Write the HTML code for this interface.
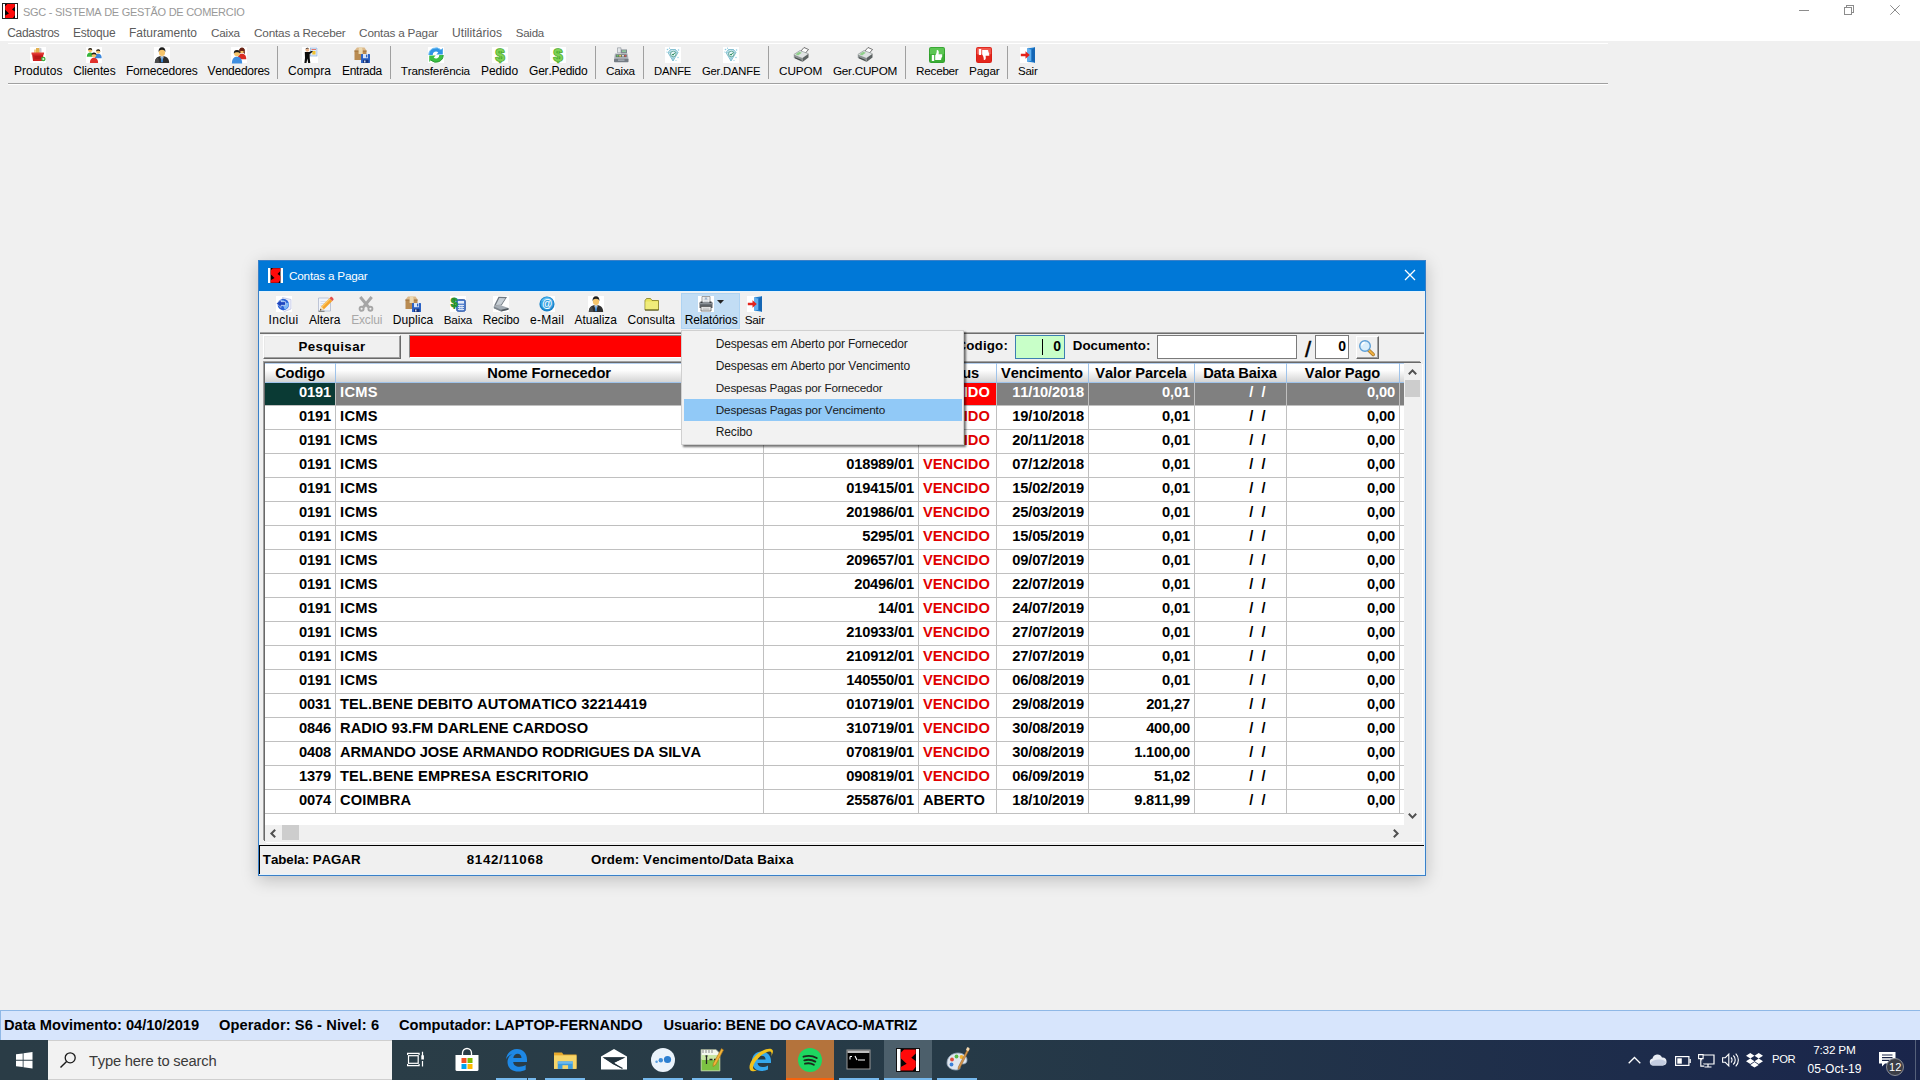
<!DOCTYPE html>
<html lang="pt-BR"><head><meta charset="utf-8"><title>SGC - SISTEMA DE GESTÃO DE COMERCIO</title>
<style>
*{margin:0;padding:0;box-sizing:border-box;font-kerning:none!important}
html,body{font-kerning:none;width:1920px;height:1080px;overflow:hidden;background:#f0f0f0;font-family:"Liberation Sans",sans-serif}
.abs{position:absolute}
svg{position:absolute;overflow:visible}
.t{position:absolute;white-space:nowrap;line-height:1}
.ui{font:12px/15px "Liberation Sans",sans-serif}
#titlebar{position:absolute;left:0;top:0;width:1920px;height:41px;background:#fff}
#tb1{position:absolute;left:8px;top:43px;width:1600px;height:41px;border-top:1px solid #fff;border-bottom:1px solid #a0a0a0;box-shadow:0 1px 0 #fff}
.vsep{position:absolute;width:1px;background:#a0a0a0}
#dlgshadow{position:absolute;left:258px;top:260px;width:1168px;height:616px;box-shadow:0 4px 16px 0 rgba(0,0,0,.21)}
#dlg{position:absolute;left:258px;top:260px;width:1168px;height:616px;background:#f0f0f0;border:1px solid #3a80c8;box-shadow:inset 1px 0 0 #e4f3fd,inset -1px 0 0 #e4f3fd,inset 0 -1px 0 #e4f3fd}
#dlgtitle{position:absolute;left:0;top:0;width:1166px;height:30px;background:#0078d7;border-bottom:0;box-shadow:0 1px 0 #e4f3fd}
#relbtn{position:absolute;left:681px;top:293px;width:59px;height:36px;background:#c2ddf4;border:1px solid #aed3f2}
#pesq{position:absolute;left:263px;top:335px;width:138px;height:24px;background:#f0f0f0;border:1px solid;border-color:#fff #696969 #696969 #fff;box-shadow:inset -1px -1px 0 #a0a0a0,inset 1px 1px 0 #e8e8e8;text-align:center;font:bold 13.33px/21px "Liberation Sans",sans-serif;letter-spacing:.35px;color:#000}
#redbox{position:absolute;left:409px;top:335px;width:330px;height:23px;background:#f00;border:1px solid;border-color:#8a8a8a #fff #fff #8a8a8a}
.lbl{font:bold 13.33px/16px "Liberation Sans",sans-serif;color:#000}
#codbox{position:absolute;left:1015px;top:335px;width:50px;height:24px;background:#c8ffc8;border:1px solid #3c7fb1}
#docbox{position:absolute;left:1157px;top:335px;width:140px;height:24px;background:#fff;border:1px solid #7a7a7a}
#parbox .v{right:2px}
#parbox{position:absolute;left:1315px;top:335px;width:34px;height:24px;background:#fff;border:1px solid #7a7a7a}
.v{position:absolute;right:3px;top:2px;font:bold 14px/16px "Liberation Sans",sans-serif;color:#000}
.caret{position:absolute;left:26px;top:3px;width:1px;height:16px;background:#000}
#lupa{position:absolute;left:1356px;top:336px;width:23px;height:23px;background:#f0f0f0;border:1px solid;border-color:#fff #696969 #696969 #fff;box-shadow:inset -1px -1px 0 #a0a0a0}
#grid{isolation:isolate;position:absolute;left:265px;top:363px;width:1157px;height:479px;background:#fff;box-shadow:-1px -1px 0 #696969,-2px -2px 0 #a0a0a0,1px 1px 0 #fff}
#ghead{position:absolute;left:0;top:0;width:1139px;height:20px;z-index:2;border-top:1px solid #b5cfee;background:linear-gradient(#fff 0%,#fdfdfd 35%,#d4d4d4 100%);border-bottom:1px solid #9fc3ea}
.gh{position:absolute;top:0;height:20px;z-index:3;text-align:center;letter-spacing:-.12px;font:bold 14.67px/21px "Liberation Sans",sans-serif;color:#000;white-space:nowrap;overflow:hidden}
.ghs{position:absolute;top:0;width:1px;height:20px;background:#9fc3ea;z-index:3}
.gvs{position:absolute;top:20px;width:1px;height:431px;background:#c0c0c0;z-index:1}
.row{position:absolute;left:0;width:1139px;height:24px;border-bottom:1px solid #c0c0c0}
.row .c{position:absolute;top:0;height:23px;font:bold 14.67px/21px "Liberation Sans",sans-serif;color:#000;white-space:nowrap;overflow:hidden}
.row .c.ar{text-align:right;padding-right:4px;letter-spacing:-.16px}
.row .c.al{text-align:left;padding-left:5px}
.row .c.ac{text-align:center}
.row .c.dt{padding-left:35px}
.row .c.venc{color:#e00000}
.row.sel{background:linear-gradient(#808080,#808080) 0 1px/100% 22px no-repeat}
.row.sel .c{color:#fff}
.row.sel .c:first-child{background:linear-gradient(#0a3a34,#0a3a34) 0 1px/100% 22px no-repeat}
.row.sel .c.venc{background:linear-gradient(#f00,#f00) 0 1px/100% 22px no-repeat;color:#fff}
#vsb{position:absolute;left:1139px;top:0;width:18px;height:479px;background:#f0f0f0;z-index:4}
#vthumb{position:absolute;left:1px;top:17px;width:15px;height:17px;background:#cdcdcd}
#hsb{position:absolute;left:0;top:462px;width:1157px;height:17px;background:#f0f0f0;z-index:4}
#hthumb{position:absolute;left:17px;top:0;width:17px;height:15px;background:#cdcdcd}
#dstat{position:absolute;left:259px;top:845px;width:1165px;height:29px;background:#f0f0f0;border-top:1px solid #000;border-left:1px solid #000}
.sb2{font:bold 13.33px/16px "Liberation Sans",sans-serif;color:#000;letter-spacing:.1px}
#menu{position:absolute;left:681px;top:330px;width:283px;height:115px;background:#f2f2f2;border:1px solid #d0d0d0;box-shadow:2px 2px 2px rgba(0,0,0,.55)}
#menu .hl{position:absolute;left:2px;top:68px;width:278px;height:22px;background:#91c9f7}
#mstat{position:absolute;left:0;top:1010px;width:1920px;height:30px;background:#d7e5fc;border-top:1px solid #8fb8e6;border-left:1px solid #8fb8e6}
.sb1{font:bold 14.67px/16px "Liberation Sans",sans-serif;color:#000}
#taskbar{position:absolute;left:0;top:1040px;width:1920px;height:40px;background:linear-gradient(90deg,#2a3c46 0%,#2a3d47 20%,#263a47 50%,#1d2c4b 85%,#1a254b 100%)}
.tk15{font:15px/18px "Liberation Sans",sans-serif}
.tk12{font:12px/15px "Liberation Sans",sans-serif}
.tk11{font:11px/13px "Liberation Sans",sans-serif}

</style></head><body>

<div id="titlebar"></div>
<svg style="left:2px;top:3px" width="16" height="16" viewBox="0 0 16 16"><rect x="0" y="0" width="16" height="16" fill="#fff"/><rect x=".5" y=".5" width="15" height="15" fill="none" stroke="#222" stroke-width="1"/><rect x="3" y="1" width="10" height="14" fill="#050505"/><path transform="translate(.5,.8) scale(1,.96)" d="M4.800 .300h7.500V3L9.500 6l2.800 2.100V12l-1.800 2.700H2.700v-2.400L6.500 10 2.700 6.300V2.500z" fill="#ff0a0a"/></svg>
<div class="t ui" style="left:23.00px;top:5px;color:#999;"><span style="line-height:0;letter-spacing:-0.272px;font-size:11.0px;">SGC - SISTEMA DE GESTÃO DE COMERCIO</span></div>
<svg style="left:1798px;top:4px" width="110" height="13" viewBox="0 0 110 13" shape-rendering="crispEdges"><path d="M1 6.500h10" stroke="#8c8c8c" stroke-width="1" fill="none"/><path d="M46.500 3.500h7v7h-7z M48.500 3.500v-2h7v7h-2" stroke="#8c8c8c" stroke-width="1" fill="none"/></svg><svg style="left:1890px;top:5px" width="10" height="10" viewBox="0 0 10 10"><path d="M.3 .3l9.400 9.400M9.700 .3L.3 9.700" stroke="#8c8c8c" stroke-width="1" fill="none"/></svg>
<div class="t ui" style="left:7.25px;top:26px;color:#5c5c5c;"><span style="line-height:0;letter-spacing:-0.299px;">Cadastros</span></div>
<div class="t ui" style="left:72.90px;top:26px;color:#5c5c5c;"><span style="line-height:0;letter-spacing:-0.204px;">Estoque</span></div>
<div class="t ui" style="left:128.90px;top:26px;color:#5c5c5c;"><span style="line-height:0;letter-spacing:0.007px;">Faturamento</span></div>
<div class="t ui" style="left:211.00px;top:26px;color:#5c5c5c;"><span style="line-height:0;letter-spacing:-0.228px;font-size:11.75px;">Caixa</span></div>
<div class="t ui" style="left:254.10px;top:26px;color:#5c5c5c;"><span style="line-height:0;letter-spacing:-0.206px;font-size:11.75px;">Contas a Receber</span></div>
<div class="t ui" style="left:359.10px;top:26px;color:#5c5c5c;"><span style="line-height:0;letter-spacing:-0.196px;font-size:11.75px;">Contas a Pagar</span></div>
<div class="t ui" style="left:452.00px;top:26px;color:#5c5c5c;"><span style="line-height:0;letter-spacing:0.069px;">Utilitários</span></div>
<div class="t ui" style="left:515.75px;top:26px;color:#5c5c5c;"><span style="line-height:0;letter-spacing:-0.232px;font-size:11.5px;">Saida</span></div>
<div id="tb1"></div>
<div class="vsep" style="left:277px;top:46px;height:33px"></div>
<div class="vsep" style="left:390px;top:46px;height:33px"></div>
<div class="vsep" style="left:595px;top:46px;height:33px"></div>
<div class="vsep" style="left:643px;top:46px;height:33px"></div>
<div class="vsep" style="left:768px;top:46px;height:33px"></div>
<div class="vsep" style="left:905px;top:46px;height:33px"></div>
<div class="vsep" style="left:1007px;top:46px;height:33px"></div>
<div class="t ui" style="left:13.90px;top:64px;color:#000;"><span style="line-height:0;letter-spacing:0.084px;">Produtos</span></div>
<svg style="left:30px;top:47px" width="16" height="16" viewBox="0 0 16 16"><rect width="16" height="16" fill="#fff"/><path d="M4 2.500h6.500v5H4z" fill="#f0cf85"/><path d="M6 1h3.500v5H6z" fill="#e2b04e"/><path d="M9.500 .500l2 1v4h-2z" fill="#c9ccd2"/><path d="M2 6.500h11.500l-1 7.500H3z" fill="#cc1f1f"/><path d="M1.500 5.500h12.500v2H1.500z" fill="#e23b35"/><path d="M4.500 9h6.500v3H4.500z" fill="#b81818"/><circle cx="13.300" cy="12" r="2.300" fill="#39b03a"/><path d="M12.300 12h2M13.300 11v2" stroke="#fff" stroke-width=".8"/></svg>
<div class="t ui" style="left:73.25px;top:64px;color:#000;"><span style="line-height:0;letter-spacing:-0.138px;">Clientes</span></div>
<svg style="left:86px;top:47px" width="16" height="16" viewBox="0 0 16 16"><rect width="16" height="16" fill="#fff"/><path d="M0.8460000000000001 9.83c0-3.2760000000000002 1.56-4.367999999999999 3.354-4.367999999999999s3.354 1.0919999999999999 3.354 4.367999999999999z" fill="#35b43a"/><circle cx="4.2" cy="3.2" r="1.9500000000000002" fill="#f6c46a"/><path d="M2.094 3.3560000000000003a2.1060000000000003 2.262 0 0 1 4.212000000000001 0c-0.78-1.0919999999999999-3.4320000000000004-1.0919999999999999-4.212000000000001 0z" fill="#1a1a1a"/><path d="M8.76 11.200000000000001c0-3.3600000000000003 1.6-4.4799999999999995 3.44-4.4799999999999995s3.44 1.1199999999999999 3.44 4.4799999999999995z" fill="#3a86dc"/><circle cx="12.2" cy="4.4" r="2.0" fill="#f6c46a"/><path d="M10.04 4.5600000000000005a2.16 2.32 0 0 1 4.32 0c-0.8-1.1199999999999999-3.5200000000000005-1.1199999999999999-4.32 0z" fill="#1a1a1a"/><path d="M3.915 16.075c0-3.9899999999999998 1.9-5.319999999999999 4.085-5.319999999999999s4.085 1.3299999999999998 4.085 5.319999999999999z" fill="#e0302a"/><circle cx="8" cy="8" r="2.375" fill="#f6c46a"/><path d="M5.4350000000000005 8.19a2.565 2.755 0 0 1 5.13 0c-0.95-1.3299999999999998-4.18-1.3299999999999998-5.13 0z" fill="#1a1a1a"/></svg>
<div class="t ui" style="left:126.00px;top:64px;color:#000;"><span style="line-height:0;letter-spacing:-0.219px;">Fornecedores</span></div>
<svg style="left:154px;top:47px" width="16" height="16" viewBox="0 0 16 16"><rect width="16" height="16" fill="#fff"/><path d="M.8 16c0-4.800 2.700-7 7.200-7s7.200 2.200 7.200 7z" fill="#2e2e2e"/><path d="M.8 16c0-3 1.200-5 3.200-6l1.500 6z" fill="#4a4a4a"/><path d="M6.300 9.300l1.700 6.200 1.700-6.200z" fill="#fff"/><path d="M7.500 10h1l.5 4.500-1 1.300-1-1.300z" fill="#2f7fd0"/><ellipse cx="8" cy="5.600" rx="3.100" ry="3.500" fill="#f6c56c"/><path d="M4.600 5.200C4.300 2 5.800.3 8 .3s3.700 1.700 3.400 4.900c-.600-1.700-1.500-2.400-3.400-2.400s-2.800.700-3.400 2.400z" fill="#1c1c1c"/></svg>
<div class="t ui" style="left:207.60px;top:64px;color:#000;"><span style="line-height:0;letter-spacing:-0.281px;">Vendedores</span></div>
<svg style="left:231px;top:47px" width="16" height="16" viewBox="0 0 16 16"><rect width="16" height="16" fill="#fff"/><path d="M6.7 12.3c0-4.2 2.0-5.6 4.3-5.6s4.3 1.4 4.3 5.6z" fill="#d92b22"/><circle cx="11" cy="3.8" r="2.5" fill="#f6c46a"/><path d="M8.3 4.0a2.7 2.9 0 0 1 5.4 0c-1.0-1.4-4.4-1.4-5.4 0z" fill="#5a1e12"/><path d="M8.200 4.500c0-3 1.200-4 2.800-4s2.800 1 2.800 4l.2 2.500-1.500-1V4l-3 0v2l-1.500 1z" fill="#6a2416"/><path d="M0.8400000000000007 16.5c0-5.04 2.4-6.72 5.159999999999999-6.72s5.159999999999999 1.68 5.159999999999999 6.72z" fill="#3f8ee0"/><circle cx="6" cy="6.3" r="3.0" fill="#f6c46a"/><path d="M2.76 6.54a3.24 3.48 0 0 1 6.48 0c-1.2-1.68-5.28-1.68-6.48 0z" fill="#1a1a1a"/></svg>
<div class="t ui" style="left:288.00px;top:64px;color:#000;"><span style="line-height:0;letter-spacing:0.071px;">Compra</span></div>
<svg style="left:302px;top:47px" width="16" height="16" viewBox="0 0 16 16"><rect width="16" height="16" fill="#fff"/><rect x="8.500" y="1" width="6.500" height="8" fill="#dfeaf8" stroke="#8db2e0" stroke-width=".7"/><rect x="10.300" y="4" width="3.200" height="3.500" fill="#f2c230"/><path d="M9.500 2.500h4.500" stroke="#e05a4a" stroke-width=".8"/><circle cx="5.300" cy="2.800" r="1.900" fill="#e9b48c"/><path d="M3.500 2.300a1.900 1.900 0 0 1 3.600-.300c-1-.600-2.500-.500-3.600.300z" fill="#222"/><path d="M2.800 5h4.400l3-1.300.5 1-3 2.300v4l.6 5H6.200l-.9-4.500-.8 4.500H2.400l.6-5z" fill="#0c0c0c"/></svg>
<div class="t ui" style="left:342.00px;top:64px;color:#000;"><span style="line-height:0;letter-spacing:-0.289px;">Entrada</span></div>
<svg style="left:354px;top:47px" width="16" height="16" viewBox="0 0 16 16"><path d="M.5 3.500L3 0.500h7.500l2 3z" fill="#dcb98a"/><path d="M.5 3.500h12v9.500H.5z" fill="#b98b52"/><path d="M.5 3.500h12v1.200H.5z" fill="#a57740"/><path d="M5 .5h3l.7 3v3.500H4.600V3.500z" fill="#ecd9b0"/><rect x="7" y="7" width="9" height="9" rx=".6" fill="#2b62c4"/><rect x="9" y="7" width="5" height="4.200" fill="#d6e4f8"/><rect x="12" y="7.600" width="1.300" height="2.800" fill="#2b62c4"/><rect x="9" y="12.800" width="5.500" height="3.200" fill="#17357c"/><rect x="10" y="13.500" width="1.500" height="2" fill="#cfd8e8"/></svg>
<div class="t ui" style="left:400.75px;top:64px;color:#000;"><span style="line-height:0;letter-spacing:-0.206px;font-size:11.75px;">Transferência</span></div>
<svg style="left:428px;top:47px" width="16" height="16" viewBox="0 0 16 16"><rect width="16" height="16" fill="#fff"/><path d="M.8 8A7.200 7.200 0 0 1 13 2.800L14.800 1v6.500H8.300l2-2A3.300 3.300 0 0 0 4.700 8z" fill="#2f95e4"/><path d="M.8 8A7.200 7.200 0 0 1 13 2.800" fill="none" stroke="#7cc4f6" stroke-width="1"/><path d="M15.200 8A7.200 7.200 0 0 1 3 13.200L1.200 15V8.500h6.500l-2 2A3.300 3.300 0 0 0 11.300 8z" fill="#3cc043"/><path d="M15.200 8A7.200 7.200 0 0 1 3 13.200" fill="none" stroke="#2a9a34" stroke-width="1"/></svg>
<div class="t ui" style="left:481.10px;top:64px;color:#000;"><span style="line-height:0;letter-spacing:-0.077px;">Pedido</span></div>
<svg style="left:492px;top:47px" width="16" height="16" viewBox="0 0 16 16"><rect width="16" height="16" fill="#fff"/><text x="8" y="13.800" text-anchor="middle" font-family="Liberation Sans,sans-serif" font-weight="bold" font-size="16.500" fill="#69c23f" stroke="#4aa82c" stroke-width="1.400" stroke-linejoin="round">$</text><text x="8" y="13.800" text-anchor="middle" font-family="Liberation Sans,sans-serif" font-weight="bold" font-size="16.500" fill="#7fd155">$</text></svg>
<div class="t ui" style="left:529.10px;top:64px;color:#000;"><span style="line-height:0;letter-spacing:-0.240px;">Ger.Pedido</span></div>
<svg style="left:550px;top:47px" width="16" height="16" viewBox="0 0 16 16"><rect width="16" height="16" fill="#fff"/><text x="8" y="13.800" text-anchor="middle" font-family="Liberation Sans,sans-serif" font-weight="bold" font-size="16.500" fill="#69c23f" stroke="#4aa82c" stroke-width="1.400" stroke-linejoin="round">$</text><text x="8" y="13.800" text-anchor="middle" font-family="Liberation Sans,sans-serif" font-weight="bold" font-size="16.500" fill="#7fd155">$</text></svg>
<div class="t ui" style="left:606.10px;top:64px;color:#000;"><span style="line-height:0;letter-spacing:-0.248px;font-size:11.75px;">Caixa</span></div>
<svg style="left:613px;top:47px" width="16" height="16" viewBox="0 0 16 16"><path d="M4.500 .800h3.500v5h-3.500z" fill="#e4e7ea" stroke="#868e96" stroke-width=".6"/><path d="M8 2.500h6v4H8z" fill="#7d868e"/><rect x="9" y="3.300" width="4" height="1.800" fill="#8fc79a"/><path d="M2 6.500h12.500l1 5H1z" fill="#b3bac1"/><rect x="2.800" y="7.500" width="10.800" height="2.600" fill="#59605f"/><rect x="3.500" y="8" width="2" height="1.600" fill="#6cc36a"/><rect x="6.200" y="8" width="2" height="1.600" fill="#e4d25a"/><rect x="9" y="8" width="2" height="1.600" fill="#cfd4d8"/><rect x="11.500" y="8" width="1.600" height="1.600" fill="#d9534f"/><rect x="1" y="11.500" width="14.500" height="3.800" rx=".8" fill="#747c84"/><rect x="5" y="12.500" width="6.500" height="1.300" fill="#aab1b8"/></svg>
<div class="t ui" style="left:654.10px;top:64px;color:#000;"><span style="line-height:0;letter-spacing:-0.226px;font-size:11.25px;">DANFE</span></div>
<svg style="left:665px;top:47px" width="16" height="16" viewBox="0 0 16 16"><rect width="16" height="16" fill="#fff"/><path d="M3 5.500l2.500-3h5l2.500 3-5 8.500z" fill="#cfeaf0" stroke="#6db3c6" stroke-width=".8"/><path d="M3 5.500h10M5.500 2.500l2.500 11.500 2.500-11.500" stroke="#7fc0d2" stroke-width=".6" fill="none"/><circle cx="8.300" cy="7" r="2.800" fill="#e9f6f8" stroke="#4e9b8a" stroke-width=".8"/><path d="M7 7l1 1.200 1.800-2.400" stroke="#2c8c5a" stroke-width="1" fill="none"/><circle cx="2.500" cy="2.500" r=".8" fill="#8ccbe0"/><circle cx="4.500" cy="1.200" r=".6" fill="#8ccbe0"/><circle cx="13.500" cy="3" r=".8" fill="#8ccbe0"/><circle cx="13" cy="10.500" r=".7" fill="#8ccbe0"/><circle cx="11" cy="13.500" r=".6" fill="#8ccbe0"/><circle cx="1.800" cy="5" r=".5" fill="#8ccbe0"/></svg>
<div class="t ui" style="left:702.00px;top:64px;color:#000;"><span style="line-height:0;letter-spacing:-0.195px;font-size:11.25px;">Ger.DANFE</span></div>
<svg style="left:723px;top:47px" width="16" height="16" viewBox="0 0 16 16"><rect width="16" height="16" fill="#fff"/><path d="M3 5.500l2.500-3h5l2.500 3-5 8.500z" fill="#cfeaf0" stroke="#6db3c6" stroke-width=".8"/><path d="M3 5.500h10M5.500 2.500l2.500 11.500 2.500-11.500" stroke="#7fc0d2" stroke-width=".6" fill="none"/><circle cx="8.300" cy="7" r="2.800" fill="#e9f6f8" stroke="#4e9b8a" stroke-width=".8"/><path d="M7 7l1 1.200 1.800-2.400" stroke="#2c8c5a" stroke-width="1" fill="none"/><circle cx="2.500" cy="2.500" r=".8" fill="#8ccbe0"/><circle cx="4.500" cy="1.200" r=".6" fill="#8ccbe0"/><circle cx="13.500" cy="3" r=".8" fill="#8ccbe0"/><circle cx="13" cy="10.500" r=".7" fill="#8ccbe0"/><circle cx="11" cy="13.500" r=".6" fill="#8ccbe0"/><circle cx="1.800" cy="5" r=".5" fill="#8ccbe0"/></svg>
<div class="t ui" style="left:779.10px;top:64px;color:#000;"><span style="line-height:0;letter-spacing:-0.147px;font-size:11.75px;">CUPOM</span></div>
<svg style="left:793px;top:47px" width="16" height="16" viewBox="0 0 16 16"><path d="M7.500 4.500L11 .500l4.500 2-3.500 4z" fill="#fff" stroke="#3c3c3c" stroke-width=".7"/><path d="M.8 7.500L7 3.500l8.500 3.200L9.500 11z" fill="#dfe3e3"/><path d="M.8 7.500L9.500 11v4L.8 11z" fill="#8d9494"/><path d="M9.500 11l6-4.300v3.800l-6 4.500z" fill="#5c6262"/><path d="M2.500 7.300l3.800-2.500 2.500 1-3.800 2.600z" fill="#8fd08a"/><path d="M2 10.300l6.500 2.600v1L2 11.300z" fill="#3c4141"/><path d="M.8 7.500L7 3.500l8.500 3.200" fill="none" stroke="#6f7676" stroke-width=".5"/></svg>
<div class="t ui" style="left:833.00px;top:64px;color:#000;"><span style="line-height:0;letter-spacing:-0.287px;font-size:11.75px;">Ger.CUPOM</span></div>
<svg style="left:857px;top:47px" width="16" height="16" viewBox="0 0 16 16"><path d="M7.500 4.500L11 .500l4.500 2-3.500 4z" fill="#fff" stroke="#3c3c3c" stroke-width=".7"/><path d="M.8 7.500L7 3.500l8.500 3.200L9.500 11z" fill="#dfe3e3"/><path d="M.8 7.500L9.500 11v4L.8 11z" fill="#8d9494"/><path d="M9.500 11l6-4.300v3.800l-6 4.500z" fill="#5c6262"/><path d="M2.500 7.300l3.800-2.500 2.500 1-3.800 2.600z" fill="#8fd08a"/><path d="M2 10.300l6.500 2.600v1L2 11.300z" fill="#3c4141"/><path d="M.8 7.500L7 3.500l8.500 3.200" fill="none" stroke="#6f7676" stroke-width=".5"/></svg>
<div class="t ui" style="left:916.10px;top:64px;color:#000;"><span style="line-height:0;letter-spacing:-0.287px;font-size:11.75px;">Receber</span></div>
<svg style="left:929px;top:47px" width="16" height="16" viewBox="0 0 16 16"><rect x="0" y="0" width="16" height="16" rx="2.200" fill="#2f9e2b"/><rect x=".8" y=".8" width="14.400" height="7.200" rx="1.600" fill="#5cc653"/><rect x=".8" y="7" width="14.400" height="8.200" rx="1.600" fill="#3cae36"/><path d="M2.800 8h2.400v6H2.800z" fill="#fff"/><path d="M6.200 8.300C7.500 7 7.800 5 7.800 3c1.700-.300 2.400 1.500 1.800 4.300h3.200c.9 0 .9 1.400 0 1.400h-1.300 1.100c.9 0 .9 1.400 0 1.400h-1.200.8c.9 0 .9 1.400 0 1.400h-1 .4c.9 0 .9 1.400 0 1.400H6.200z" fill="#fff"/></svg>
<div class="t ui" style="left:969.10px;top:64px;color:#000;"><span style="line-height:0;letter-spacing:-0.190px;font-size:11.75px;">Pagar</span></div>
<svg style="left:976px;top:47px" width="16" height="16" viewBox="0 0 16 16"><rect x="0" y="0" width="16" height="16" rx="2.200" fill="#d81e15"/><rect x=".8" y=".8" width="14.400" height="7.200" rx="1.600" fill="#f2564c"/><rect x=".8" y="7" width="14.400" height="8.200" rx="1.600" fill="#e3261c"/><path d="M2.800 8h2.400V2H2.800z" fill="#fff"/><path d="M6.200 7.700C7.500 9 7.800 11 7.800 13c1.700.300 2.400-1.500 1.800-4.300h3.200c.9 0 .9-1.400 0-1.400h-1.300 1.100c.9 0 .9-1.400 0-1.400h-1.200.8c.9 0 .9-1.400 0-1.400h-1 .4c.9 0 .9-1.400 0-1.400H6.200z" fill="#fff"/></svg>
<div class="t ui" style="left:1018.00px;top:64px;color:#000;"><span style="line-height:0;letter-spacing:-0.238px;font-size:11.5px;">Sair</span></div>
<svg style="left:1020px;top:47px" width="16" height="16" viewBox="0 0 16 16"><rect x="0" y="0" width="8" height="16" fill="#fff"/><path d="M7 1.500L15 .300v15.400L7 14.500z" fill="#1f7fd2"/><path d="M7 1.500l4.500 1.200v11L7 14.500z" fill="#62b0ee"/><path d="M11.500 2.700L15 .300v15.400l-3.500-2z" fill="#1566b4"/><path d="M.8 6.700h4.700V4.200L9.800 8 5.500 11.800V9.300H.8z" fill="#e3241c"/></svg>
<div id="dlgshadow"></div><div id="dlg"><div id="dlgtitle"></div></div>
<svg style="left:267.5px;top:267.5px" width="15" height="15" viewBox="0 0 15 15"><rect x="0" y="0" width="15" height="15" fill="#fff"/><rect x="2.500" y="0" width="10" height="15" fill="#050505"/><path d="M4.800 .300h7.500V3L9.500 6l2.800 2.100V12l-1.800 2.700H2.700v-2.400L6.500 10 2.700 6.300V2.500z" fill="#ff0a0a"/></svg>
<div class="t ui" style="left:289.00px;top:269px;color:#fff;"><span style="line-height:0;letter-spacing:-0.224px;font-size:11.75px;">Contas a Pagar</span></div>
<svg class="abs" style="left:1404px;top:269px" width="12" height="12" viewBox="0 0 12 12"><path d="M1 1 L11 11 M11 1 L1 11" stroke="#fff" stroke-width="1.3" fill="none"/></svg>
<div id="relbtn"></div>
<div class="t ui" style="left:268.50px;top:313px;color:#000;"><span style="line-height:0;letter-spacing:0.331px;">Inclui</span></div>
<svg style="left:276px;top:296px" width="16" height="16" viewBox="0 0 16 16"><rect width="16" height="16" fill="#fff"/><path d="M6.500 1.500l8.500 2v9.500l-6.500 2.500-4-3z" fill="#eef0fa" stroke="#b9bfe0" stroke-width=".7"/><circle cx="7.300" cy="8.500" r="5.700" fill="#2a62d6"/><path d="M3 6c2-2.500 5-2 6-.5s2.500 2 3.500.5c.8 3.500-1 6.500-3.500 7.500-1.500-1-.5-3-2.500-3.500S3.500 8 3 6z" fill="#7eb8f6"/><path d="M.5 7.500L5 3.500v2.200h4.500v3.600H5v2.200z" fill="#1d46c0" stroke="#fff" stroke-width=".5"/></svg>
<div class="t ui" style="left:309.00px;top:313px;color:#000;"><span style="line-height:0;letter-spacing:0.026px;">Altera</span></div>
<svg style="left:317px;top:296px" width="16" height="16" viewBox="0 0 16 16"><path d="M1.500 2h10l2 2v11h-12z" fill="#f1f4fa" stroke="#a8b2c8" stroke-width=".7"/><path d="M3.500 5.500h6M3.500 7.500h5M3.500 9.500h3" stroke="#ccd3e2" stroke-width=".7"/><path d="M3 14.500l1.200-4L12.500 2.200l2.800 2.800L7 13.300z" fill="#f5a52c"/><path d="M4.200 10.500L12.500 2.200l1 1-8.300 8.300z" fill="#fbc868"/><path d="M12.500 2.200l1.200-1.200c.8-.8 3.600 2 2.800 2.800L15.300 5z" fill="#e2504a"/><path d="M3 14.500l1.200-4L7 13.300z" fill="#f6e3c0"/><path d="M3 14.500l.5-1.700 1.200 1.200z" fill="#2a2a2a"/><path d="M1.500 15.300h6" stroke="#555" stroke-width=".8"/></svg>
<div class="t ui" style="left:351.20px;top:313px;color:#a8a8a8;"><span style="line-height:0;letter-spacing:-0.168px;">Exclui</span></div>
<svg style="left:358px;top:296px" width="16" height="16" viewBox="0 0 16 16"><path d="M2.300 1L10.500 11M13.700 1L5.500 11" stroke="#a6a6a6" stroke-width="3" fill="none"/><circle cx="3.600" cy="12.800" r="2" fill="none" stroke="#a6a6a6" stroke-width="1.900"/><circle cx="12.400" cy="12.800" r="2" fill="none" stroke="#a6a6a6" stroke-width="1.900"/></svg>
<div class="t ui" style="left:392.80px;top:313px;color:#000;"><span style="line-height:0;letter-spacing:0.069px;">Duplica</span></div>
<svg style="left:405px;top:296px" width="16" height="16" viewBox="0 0 16 16"><path d="M.5 3.500L3 0.500h7.500l2 3z" fill="#dcb98a"/><path d="M.5 3.500h12v9.500H.5z" fill="#b98b52"/><path d="M.5 3.500h12v1.200H.5z" fill="#a57740"/><path d="M5 .5h3l.7 3v3.500H4.600V3.500z" fill="#ecd9b0"/><rect x="7" y="7" width="9" height="9" rx=".6" fill="#2b62c4"/><rect x="9" y="7" width="5" height="4.200" fill="#d6e4f8"/><rect x="12" y="7.600" width="1.300" height="2.800" fill="#2b62c4"/><rect x="9" y="12.800" width="5.500" height="3.200" fill="#17357c"/><rect x="10" y="13.500" width="1.500" height="2" fill="#cfd8e8"/></svg>
<div class="t ui" style="left:443.70px;top:313px;color:#000;"><span style="line-height:0;letter-spacing:-0.178px;font-size:11.75px;">Baixa</span></div>
<svg style="left:450px;top:296px" width="16" height="16" viewBox="0 0 16 16"><rect width="16" height="16" fill="#fff"/><rect x="6.500" y="3.500" width="9" height="12" rx="1.800" fill="#4a78c8" stroke="#2d559e" stroke-width=".7"/><rect x="8" y="5" width="6" height="2.600" fill="#e3ecf8"/><path d="M8 9.500h6M8 11.500h6M8 13.500h6M9.800 8.700v5.600M12 8.700v5.600" stroke="#dce6f6" stroke-width="1"/><text x="4.300" y="10.500" text-anchor="middle" font-family="Liberation Sans,sans-serif" font-weight="bold" font-size="12.500" fill="#2fae3a" stroke="#1f8a2a" stroke-width=".8">$</text></svg>
<div class="t ui" style="left:482.80px;top:313px;color:#000;"><span style="line-height:0;letter-spacing:-0.159px;">Recibo</span></div>
<svg style="left:493px;top:296px" width="16" height="16" viewBox="0 0 16 16"><rect width="16" height="16" fill="#fff"/><path d="M5.500 .800l8.500.300-5.500 8.400-7.500.300z" fill="#707880"/><path d="M6.300 2l6 .200-4.300 6.500-5.200.200z" fill="#c9d0d6"/><path d="M.8 10l7.700-.500L15.500 12v1.800l-7.300 1.700L.8 12.200z" fill="#a5adb5"/><path d="M8.200 13.700l7.300-1.700v1.800l-7.300 1.700z" fill="#50585f"/><path d="M.8 10.500l7.400 3.200v1.800L.8 12.200z" fill="#7b838b"/></svg>
<div class="t ui" style="left:530.00px;top:313px;color:#000;"><span style="line-height:0;letter-spacing:0.255px;">e-Mail</span></div>
<svg style="left:539px;top:296px" width="16" height="16" viewBox="0 0 16 16"><rect x="8" y="0" width="8" height="16" fill="#fff"/><circle cx="8" cy="8" r="7.600" fill="#1a82c8"/><circle cx="8" cy="7.200" r="6.400" fill="#36a4e4"/><path d="M2.500 5a6.400 6.400 0 0 1 11 0c-3-1.500-8-1.500-11 0z" fill="#6cc2f2"/><text x="8" y="11" text-anchor="middle" font-family="Liberation Sans,sans-serif" font-weight="bold" font-size="10.500" fill="#fff">@</text></svg>
<div class="t ui" style="left:574.50px;top:313px;color:#000;"><span style="line-height:0;letter-spacing:-0.024px;">Atualiza</span></div>
<svg style="left:588px;top:296px" width="16" height="16" viewBox="0 0 16 16"><rect width="16" height="16" fill="#fff"/><path d="M.8 16c0-4.800 2.700-7 7.200-7s7.200 2.200 7.200 7z" fill="#2e2e2e"/><path d="M.8 16c0-3 1.200-5 3.200-6l1.500 6z" fill="#4a4a4a"/><path d="M6.300 9.300l1.700 6.200 1.700-6.200z" fill="#fff"/><path d="M7.500 10h1l.5 4.500-1 1.300-1-1.300z" fill="#2f7fd0"/><ellipse cx="8" cy="5.600" rx="3.100" ry="3.500" fill="#f6c56c"/><path d="M4.600 5.200C4.300 2 5.800.3 8 .3s3.700 1.700 3.400 4.900c-.600-1.700-1.500-2.400-3.400-2.400s-2.800.700-3.400 2.400z" fill="#1c1c1c"/></svg>
<div class="t ui" style="left:627.50px;top:313px;color:#000;"><span style="line-height:0;letter-spacing:0.005px;">Consulta</span></div>
<svg style="left:644px;top:296px" width="16" height="16" viewBox="0 0 16 16"><path d="M1 4.500L2.500 2.500h4L8 4.500h6.500v9.500H1z" fill="#e9e35a" stroke="#7f7a1c" stroke-width=".8"/><path d="M1.500 5.500h12.500v8H1.500z" fill="#f0ec7a"/><path d="M1 14h13.500" stroke="#4a4a1a" stroke-width="1"/></svg>
<div class="t ui" style="left:684.80px;top:313px;color:#000;"><span style="line-height:0;letter-spacing:-0.132px;">Relatórios</span></div>
<svg style="left:698px;top:296px" width="16" height="16" viewBox="0 0 16 16"><rect width="16" height="16" fill="#fff"/><path d="M4 .500h8v6.500H4z" fill="#f8f8f8" stroke="#7a7a7a" stroke-width=".7"/><path d="M5.500 2h5M5.500 3.700h5M5.500 5.300h5" stroke="#b5bcc4" stroke-width=".7"/><rect x="7" y="1.500" width="2" height="2" fill="#9fb6d0"/><path d="M1.500 6.500h13v5.500h-13z" fill="#5d6166"/><path d="M1.500 6.500h13v1.800h-13z" fill="#8b9197"/><path d="M2.500 5.500h2v1.500h-2zM11.500 5.500h2v1.500h-2z" fill="#3d4045"/><path d="M3 10.500h10v4.500H3z" fill="#f1f1f1" stroke="#4a4a4a" stroke-width=".7"/><path d="M4.500 12.200h7M4.500 13.600h7" stroke="#a0a0a0" stroke-width=".6"/></svg>
<div class="t ui" style="left:744.80px;top:313px;color:#000;"><span style="line-height:0;letter-spacing:-0.299px;font-size:11.75px;">Sair</span></div>
<svg style="left:747px;top:296px" width="16" height="16" viewBox="0 0 16 16"><rect x="0" y="0" width="8" height="16" fill="#fff"/><path d="M7 1.500L15 .300v15.400L7 14.500z" fill="#1f7fd2"/><path d="M7 1.500l4.500 1.200v11L7 14.500z" fill="#62b0ee"/><path d="M11.500 2.700L15 .300v15.400l-3.500-2z" fill="#1566b4"/><path d="M.8 6.700h4.700V4.200L9.800 8 5.500 11.800V9.300H.8z" fill="#e3241c"/></svg>
<svg class="abs" style="left:717px;top:300px" width="8" height="4" viewBox="0 0 8 4"><path d="M0 0h7L3.5 3.8z" fill="#222"/></svg>
<div class="abs" style="left:260px;top:332px;width:1164px;height:2px;background:linear-gradient(#a6a6a6 50%,#6e6e6e 50%)"></div>
<div id="pesq"><span>Pesquisar</span></div>
<div id="redbox"></div>
<div class="t lbl" style="left:956.50px;top:338px;"><span style="line-height:0;letter-spacing:0.166px;">Codigo:</span></div>
<div id="codbox"><span class="caret"></span><span class="v">0</span></div>
<div class="t lbl" style="left:1072.80px;top:338px;"><span style="line-height:0;letter-spacing:-0.025px;">Documento:</span></div>
<div id="docbox"></div>
<div class="t" style="left:1305px;top:336.500px;-webkit-text-stroke:.5px #000;font:22px 'Liberation Sans',sans-serif;color:#000">/</div>
<div id="parbox"><span class="v">0</span></div>
<div id="lupa"><svg style="left:1px;top:2px" width="18" height="18" viewBox="0 0 18 18"><path d="M10 10.500l5.200 5" stroke="#9a6a1c" stroke-width="3.400" stroke-linecap="round"/><path d="M10 10.500l5.200 5" stroke="#f0b040" stroke-width="2.200" stroke-linecap="round"/><circle cx="7" cy="7" r="5.300" fill="#d9eefb" stroke="#5d9fd6" stroke-width="1.400"/><path d="M3.800 6.500a3.400 3.400 0 0 1 3-3" stroke="#fff" stroke-width="1.300" fill="none"/></svg></div>
<div id="grid">
<div id="ghead"></div>
<div class="gh" style="left:0px;width:70px">Codigo</div>
<div class="gh" style="left:70px;width:428px">Nome Fornecedor</div>
<div class="gh" style="left:498px;width:155px">Documento</div>
<div class="gh" style="left:653px;width:78px">Status</div>
<div class="gh" style="left:731px;width:92px">Vencimento</div>
<div class="gh" style="left:823px;width:106px">Valor Parcela</div>
<div class="gh" style="left:929px;width:92px">Data Baixa</div>
<div class="gh" style="left:1021px;width:113px">Valor Pago</div>
<div class="ghs" style="left:70px"></div>
<div class="ghs" style="left:498px"></div>
<div class="ghs" style="left:653px"></div>
<div class="ghs" style="left:731px"></div>
<div class="ghs" style="left:823px"></div>
<div class="ghs" style="left:929px"></div>
<div class="ghs" style="left:1021px"></div>
<div class="ghs" style="left:1134px"></div>
<div class="row sel" style="top:19px">
<div class="c ar" style="left:0px;width:70px">0191</div>
<div class="c al" style="left:70px;width:428px"><span style="letter-spacing:0.306px">ICMS</span></div>
<div class="c ar" style="left:498px;width:155px">017935/01</div>
<div class="c al st venc" style="left:653px;width:78px">VENCIDO</div>
<div class="c ar" style="left:731px;width:92px">11/10/2018</div>
<div class="c ar" style="left:823px;width:106px">0,01</div>
<div class="c ac dt" style="left:929px;width:92px">/&nbsp;&nbsp;/</div>
<div class="c ar" style="left:1021px;width:113px">0,00</div>
</div>
<div class="row" style="top:43px">
<div class="c ar" style="left:0px;width:70px">0191</div>
<div class="c al" style="left:70px;width:428px"><span style="letter-spacing:0.306px">ICMS</span></div>
<div class="c ar" style="left:498px;width:155px">018211/01</div>
<div class="c al st venc" style="left:653px;width:78px">VENCIDO</div>
<div class="c ar" style="left:731px;width:92px">19/10/2018</div>
<div class="c ar" style="left:823px;width:106px">0,01</div>
<div class="c ac dt" style="left:929px;width:92px">/&nbsp;&nbsp;/</div>
<div class="c ar" style="left:1021px;width:113px">0,00</div>
</div>
<div class="row" style="top:67px">
<div class="c ar" style="left:0px;width:70px">0191</div>
<div class="c al" style="left:70px;width:428px"><span style="letter-spacing:0.306px">ICMS</span></div>
<div class="c ar" style="left:498px;width:155px">018754/01</div>
<div class="c al st venc" style="left:653px;width:78px">VENCIDO</div>
<div class="c ar" style="left:731px;width:92px">20/11/2018</div>
<div class="c ar" style="left:823px;width:106px">0,01</div>
<div class="c ac dt" style="left:929px;width:92px">/&nbsp;&nbsp;/</div>
<div class="c ar" style="left:1021px;width:113px">0,00</div>
</div>
<div class="row" style="top:91px">
<div class="c ar" style="left:0px;width:70px">0191</div>
<div class="c al" style="left:70px;width:428px"><span style="letter-spacing:0.306px">ICMS</span></div>
<div class="c ar" style="left:498px;width:155px">018989/01</div>
<div class="c al st venc" style="left:653px;width:78px">VENCIDO</div>
<div class="c ar" style="left:731px;width:92px">07/12/2018</div>
<div class="c ar" style="left:823px;width:106px">0,01</div>
<div class="c ac dt" style="left:929px;width:92px">/&nbsp;&nbsp;/</div>
<div class="c ar" style="left:1021px;width:113px">0,00</div>
</div>
<div class="row" style="top:115px">
<div class="c ar" style="left:0px;width:70px">0191</div>
<div class="c al" style="left:70px;width:428px"><span style="letter-spacing:0.306px">ICMS</span></div>
<div class="c ar" style="left:498px;width:155px">019415/01</div>
<div class="c al st venc" style="left:653px;width:78px">VENCIDO</div>
<div class="c ar" style="left:731px;width:92px">15/02/2019</div>
<div class="c ar" style="left:823px;width:106px">0,01</div>
<div class="c ac dt" style="left:929px;width:92px">/&nbsp;&nbsp;/</div>
<div class="c ar" style="left:1021px;width:113px">0,00</div>
</div>
<div class="row" style="top:139px">
<div class="c ar" style="left:0px;width:70px">0191</div>
<div class="c al" style="left:70px;width:428px"><span style="letter-spacing:0.306px">ICMS</span></div>
<div class="c ar" style="left:498px;width:155px">201986/01</div>
<div class="c al st venc" style="left:653px;width:78px">VENCIDO</div>
<div class="c ar" style="left:731px;width:92px">25/03/2019</div>
<div class="c ar" style="left:823px;width:106px">0,01</div>
<div class="c ac dt" style="left:929px;width:92px">/&nbsp;&nbsp;/</div>
<div class="c ar" style="left:1021px;width:113px">0,00</div>
</div>
<div class="row" style="top:163px">
<div class="c ar" style="left:0px;width:70px">0191</div>
<div class="c al" style="left:70px;width:428px"><span style="letter-spacing:0.306px">ICMS</span></div>
<div class="c ar" style="left:498px;width:155px">5295/01</div>
<div class="c al st venc" style="left:653px;width:78px">VENCIDO</div>
<div class="c ar" style="left:731px;width:92px">15/05/2019</div>
<div class="c ar" style="left:823px;width:106px">0,01</div>
<div class="c ac dt" style="left:929px;width:92px">/&nbsp;&nbsp;/</div>
<div class="c ar" style="left:1021px;width:113px">0,00</div>
</div>
<div class="row" style="top:187px">
<div class="c ar" style="left:0px;width:70px">0191</div>
<div class="c al" style="left:70px;width:428px"><span style="letter-spacing:0.306px">ICMS</span></div>
<div class="c ar" style="left:498px;width:155px">209657/01</div>
<div class="c al st venc" style="left:653px;width:78px">VENCIDO</div>
<div class="c ar" style="left:731px;width:92px">09/07/2019</div>
<div class="c ar" style="left:823px;width:106px">0,01</div>
<div class="c ac dt" style="left:929px;width:92px">/&nbsp;&nbsp;/</div>
<div class="c ar" style="left:1021px;width:113px">0,00</div>
</div>
<div class="row" style="top:211px">
<div class="c ar" style="left:0px;width:70px">0191</div>
<div class="c al" style="left:70px;width:428px"><span style="letter-spacing:0.306px">ICMS</span></div>
<div class="c ar" style="left:498px;width:155px">20496/01</div>
<div class="c al st venc" style="left:653px;width:78px">VENCIDO</div>
<div class="c ar" style="left:731px;width:92px">22/07/2019</div>
<div class="c ar" style="left:823px;width:106px">0,01</div>
<div class="c ac dt" style="left:929px;width:92px">/&nbsp;&nbsp;/</div>
<div class="c ar" style="left:1021px;width:113px">0,00</div>
</div>
<div class="row" style="top:235px">
<div class="c ar" style="left:0px;width:70px">0191</div>
<div class="c al" style="left:70px;width:428px"><span style="letter-spacing:0.306px">ICMS</span></div>
<div class="c ar" style="left:498px;width:155px">14/01</div>
<div class="c al st venc" style="left:653px;width:78px">VENCIDO</div>
<div class="c ar" style="left:731px;width:92px">24/07/2019</div>
<div class="c ar" style="left:823px;width:106px">0,01</div>
<div class="c ac dt" style="left:929px;width:92px">/&nbsp;&nbsp;/</div>
<div class="c ar" style="left:1021px;width:113px">0,00</div>
</div>
<div class="row" style="top:259px">
<div class="c ar" style="left:0px;width:70px">0191</div>
<div class="c al" style="left:70px;width:428px"><span style="letter-spacing:0.306px">ICMS</span></div>
<div class="c ar" style="left:498px;width:155px">210933/01</div>
<div class="c al st venc" style="left:653px;width:78px">VENCIDO</div>
<div class="c ar" style="left:731px;width:92px">27/07/2019</div>
<div class="c ar" style="left:823px;width:106px">0,01</div>
<div class="c ac dt" style="left:929px;width:92px">/&nbsp;&nbsp;/</div>
<div class="c ar" style="left:1021px;width:113px">0,00</div>
</div>
<div class="row" style="top:283px">
<div class="c ar" style="left:0px;width:70px">0191</div>
<div class="c al" style="left:70px;width:428px"><span style="letter-spacing:0.306px">ICMS</span></div>
<div class="c ar" style="left:498px;width:155px">210912/01</div>
<div class="c al st venc" style="left:653px;width:78px">VENCIDO</div>
<div class="c ar" style="left:731px;width:92px">27/07/2019</div>
<div class="c ar" style="left:823px;width:106px">0,01</div>
<div class="c ac dt" style="left:929px;width:92px">/&nbsp;&nbsp;/</div>
<div class="c ar" style="left:1021px;width:113px">0,00</div>
</div>
<div class="row" style="top:307px">
<div class="c ar" style="left:0px;width:70px">0191</div>
<div class="c al" style="left:70px;width:428px"><span style="letter-spacing:0.306px">ICMS</span></div>
<div class="c ar" style="left:498px;width:155px">140550/01</div>
<div class="c al st venc" style="left:653px;width:78px">VENCIDO</div>
<div class="c ar" style="left:731px;width:92px">06/08/2019</div>
<div class="c ar" style="left:823px;width:106px">0,01</div>
<div class="c ac dt" style="left:929px;width:92px">/&nbsp;&nbsp;/</div>
<div class="c ar" style="left:1021px;width:113px">0,00</div>
</div>
<div class="row" style="top:331px">
<div class="c ar" style="left:0px;width:70px">0031</div>
<div class="c al" style="left:70px;width:428px"><span style="letter-spacing:0.067px">TEL.BENE DEBITO AUTOMATICO 32214419</span></div>
<div class="c ar" style="left:498px;width:155px">010719/01</div>
<div class="c al st venc" style="left:653px;width:78px">VENCIDO</div>
<div class="c ar" style="left:731px;width:92px">29/08/2019</div>
<div class="c ar" style="left:823px;width:106px">201,27</div>
<div class="c ac dt" style="left:929px;width:92px">/&nbsp;&nbsp;/</div>
<div class="c ar" style="left:1021px;width:113px">0,00</div>
</div>
<div class="row" style="top:355px">
<div class="c ar" style="left:0px;width:70px">0846</div>
<div class="c al" style="left:70px;width:428px"><span style="letter-spacing:0.050px">RADIO 93.FM DARLENE CARDOSO</span></div>
<div class="c ar" style="left:498px;width:155px">310719/01</div>
<div class="c al st venc" style="left:653px;width:78px">VENCIDO</div>
<div class="c ar" style="left:731px;width:92px">30/08/2019</div>
<div class="c ar" style="left:823px;width:106px">400,00</div>
<div class="c ac dt" style="left:929px;width:92px">/&nbsp;&nbsp;/</div>
<div class="c ar" style="left:1021px;width:113px">0,00</div>
</div>
<div class="row" style="top:379px">
<div class="c ar" style="left:0px;width:70px">0408</div>
<div class="c al" style="left:70px;width:428px"><span style="letter-spacing:-0.117px">ARMANDO JOSE ARMANDO RODRIGUES DA SILVA</span></div>
<div class="c ar" style="left:498px;width:155px">070819/01</div>
<div class="c al st venc" style="left:653px;width:78px">VENCIDO</div>
<div class="c ar" style="left:731px;width:92px">30/08/2019</div>
<div class="c ar" style="left:823px;width:106px">1.100,00</div>
<div class="c ac dt" style="left:929px;width:92px">/&nbsp;&nbsp;/</div>
<div class="c ar" style="left:1021px;width:113px">0,00</div>
</div>
<div class="row" style="top:403px">
<div class="c ar" style="left:0px;width:70px">1379</div>
<div class="c al" style="left:70px;width:428px"><span style="letter-spacing:0.162px">TEL.BENE EMPRESA ESCRITORIO</span></div>
<div class="c ar" style="left:498px;width:155px">090819/01</div>
<div class="c al st venc" style="left:653px;width:78px">VENCIDO</div>
<div class="c ar" style="left:731px;width:92px">06/09/2019</div>
<div class="c ar" style="left:823px;width:106px">51,02</div>
<div class="c ac dt" style="left:929px;width:92px">/&nbsp;&nbsp;/</div>
<div class="c ar" style="left:1021px;width:113px">0,00</div>
</div>
<div class="row" style="top:427px">
<div class="c ar" style="left:0px;width:70px">0074</div>
<div class="c al" style="left:70px;width:428px"><span style="letter-spacing:0.188px">COIMBRA</span></div>
<div class="c ar" style="left:498px;width:155px">255876/01</div>
<div class="c al st ab" style="left:653px;width:78px">ABERTO</div>
<div class="c ar" style="left:731px;width:92px">18/10/2019</div>
<div class="c ar" style="left:823px;width:106px">9.811,99</div>
<div class="c ac dt" style="left:929px;width:92px">/&nbsp;&nbsp;/</div>
<div class="c ar" style="left:1021px;width:113px">0,00</div>
</div>
<div class="gvs" style="left:70px"></div>
<div class="gvs" style="left:498px"></div>
<div class="gvs" style="left:653px"></div>
<div class="gvs" style="left:731px"></div>
<div class="gvs" style="left:823px"></div>
<div class="gvs" style="left:929px"></div>
<div class="gvs" style="left:1021px"></div>
<div class="gvs" style="left:1134px"></div>
<div id="vsb"><svg class="abs" style="left:4px;top:6px" width="9" height="6" viewBox="0 0 9 6"><path d="M.8 5.200 L4.5 1.4 L8.200 5.200" stroke="#505050" stroke-width="2" fill="none"/></svg><div id="vthumb"></div><svg class="abs" style="left:4px;top:450px" width="9" height="6" viewBox="0 0 9 6"><path d="M.8 .8 L4.5 4.600 L8.200 .8" stroke="#505050" stroke-width="2" fill="none"/></svg></div>
<div id="hsb"><svg class="abs" style="left:5px;top:3.5px" width="6" height="9" viewBox="0 0 6 9"><path d="M5.2 .8 L1.4 4.5 L5.2 8.200" stroke="#505050" stroke-width="2" fill="none"/></svg><div id="hthumb"></div><svg class="abs" style="left:1128px;top:3.5px" width="6" height="9" viewBox="0 0 6 9"><path d="M.8 .8 L4.600 4.5 L.8 8.200" stroke="#505050" stroke-width="2" fill="none"/></svg></div>
</div>
<div id="dstat"></div>
<div class="t sb2" style="left:262.80px;top:852px;"><span style="line-height:0;letter-spacing:-0.062px;">Tabela: PAGAR</span></div>
<div class="t sb2" style="left:466.80px;top:852px;"><span style="line-height:0;letter-spacing:0.628px;">8142/11068</span></div>
<div class="t sb2" style="left:591.00px;top:852px;"><span style="line-height:0;letter-spacing:0.142px;">Ordem: Vencimento/Data Baixa</span></div>
<div id="menu"><div class="hl"></div></div>
<div class="t ui" style="left:715.80px;top:337px;color:#1a1a1a;"><span style="line-height:0;letter-spacing:-0.173px;">Despesas em Aberto por Fornecedor</span></div>
<div class="t ui" style="left:715.80px;top:359px;color:#1a1a1a;"><span style="line-height:0;letter-spacing:-0.158px;">Despesas em Aberto por Vencimento</span></div>
<div class="t ui" style="left:715.80px;top:381px;color:#1a1a1a;"><span style="line-height:0;letter-spacing:-0.197px;font-size:11.75px;">Despesas Pagas por Fornecedor</span></div>
<div class="t ui" style="left:715.80px;top:403px;color:#1a1a1a;"><span style="line-height:0;letter-spacing:-0.179px;font-size:11.75px;">Despesas Pagas por Vencimento</span></div>
<div class="t ui" style="left:715.80px;top:425px;color:#1a1a1a;"><span style="line-height:0;letter-spacing:-0.159px;">Recibo</span></div>
<div id="mstat"></div>
<div class="t sb1" style="left:4.00px;top:1017px;"><span style="line-height:0;letter-spacing:-0.016px;">Data Movimento: 04/10/2019</span></div>
<div class="t sb1" style="left:219.00px;top:1017px;"><span style="line-height:0;letter-spacing:0.092px;">Operador: S6 - Nivel: 6</span></div>
<div class="t sb1" style="left:399.00px;top:1017px;"><span style="line-height:0;letter-spacing:0.005px;">Computador: LAPTOP-FERNANDO</span></div>
<div class="t sb1" style="left:663.50px;top:1017px;"><span style="line-height:0;letter-spacing:-0.155px;">Usuario: BENE DO CAVACO-MATRIZ</span></div>
<div id="taskbar">
<svg style="left:15.500px;top:12px" width="16.500" height="16.500" viewBox="0 0 16 16"><path d="M0 2.300l6.500-.900v6.200H0zM7.300 1.300L16 0v7.600H7.300zM0 8.400h6.500v6.200L0 13.700zM7.300 8.400H16V16l-8.700-1.200z" fill="#fff"/></svg><div class="abs" style="left:48px;top:0;width:344px;height:40px;background:#f2f2f2;border-top:1px solid #cfcfcf;border-bottom:1px solid #cfcfcf"></div><svg style="left:60px;top:12px" width="16" height="16" viewBox="0 0 16 16"><circle cx="10.200" cy="5.800" r="5" fill="none" stroke="#1a1a1a" stroke-width="1.300"/><path d="M6.600 9.400L.5 15.500" stroke="#1a1a1a" stroke-width="1.400"/></svg><svg style="left:407px;top:11px" width="18" height="17" viewBox="0 0 18 17"><path d="M.6 4V2.300h11.500V4M.6 13v1.700h11.500V13" stroke="#fff" stroke-width="1.200" fill="none"/><rect x="1.500" y="4.700" width="9.700" height="7.600" stroke="#fff" stroke-width="1.200" fill="none"/><path d="M15.500 .700v5M15.500 10v5.500" stroke="#fff" stroke-width="1.200"/><rect x="14.300" y="4.300" width="2.600" height="4.200" fill="#fff"/></svg><svg style="left:455px;top:8px" width="24" height="24" viewBox="0 0 24 24"><path d="M7.500 7V5a4.500 4.500 0 0 1 9 0v2" fill="none" stroke="#fff" stroke-width="1.300"/><path d="M0.500 7h23v14.500a1.500 1.500 0 0 1-1.500 1.500H2a1.500 1.500 0 0 1-1.500-1.500z" fill="#fff"/><rect x="6.500" y="10" width="5" height="5" fill="#f25022"/><rect x="12.500" y="10" width="5" height="5" fill="#7fba00"/><rect x="6.500" y="16" width="5" height="5" fill="#00a4ef"/><rect x="12.500" y="16" width="5" height="5" fill="#ffb900"/></svg><svg style="left:505px;top:8px" width="23" height="24" viewBox="0 0 23 24"><path d="M1 11.500C1.800 5 6.500 1 12 1c6 0 10 4.300 10 10.500v2.500H8.200c.2 3.200 2.800 4.800 6.200 4.800 2.400 0 4.400-.600 6.300-1.700v4.600c-2 1.200-4.600 1.800-7.600 1.800C6.500 23.500 2.500 19.500 2.500 14c0-3.500 1.800-6.500 4.800-8.100C4.500 6.800 2 9 1 11.500zM8.300 10h8.200c0-2.600-1.500-4.300-3.900-4.300-2.300 0-4 1.700-4.300 4.300z" fill="#1e88e5"/></svg><svg style="left:553.500px;top:10.500px" width="22.500" height="19" viewBox="0 0 24 20"><path d="M0 1.500h8.500l1.500 2H24v15H0z" fill="#e8a92c"/><path d="M0 4.500h24v14.500H0z" fill="#f7d569"/><path d="M4 11h16v8H4z" fill="#3c9be0"/><path d="M4 11h16v2.500H4z" fill="#6bb8ee"/><path d="M9 15h6v4H9z" fill="#f7d569"/></svg><svg style="left:601px;top:9px" width="26" height="21" viewBox="0 0 26 21"><path d="M0 7.500L13 0l13 7.500v13H0z" fill="#fff"/><path d="M2 8.500h22L13 13.800l8 5.700-9.500-4.500z" fill="#22323c"/><path d="M1.500 8.300L24.500 8.300 12 14.200z" fill="#22323c"/><path d="M12 14.200l9.500 5.300" stroke="#22323c" stroke-width="1.200"/></svg><svg style="left:651px;top:8px" width="24" height="24" viewBox="0 0 24 24"><circle cx="12" cy="12" r="12" fill="#eaf3fb"/><circle cx="16.500" cy="11.500" r="3.600" fill="#2b7fd0"/><circle cx="9.800" cy="12.300" r="2.200" fill="#3d8dd8"/><circle cx="5.600" cy="13.800" r="1.300" fill="#5a9fe0"/></svg><svg style="left:700px;top:7px" width="24" height="25" viewBox="0 0 24 25"><path d="M1 2.500h15l4 4V24H1z" fill="#f4f8ee" stroke="#9aa58c" stroke-width=".8"/><path d="M1.500 12h18v11.500h-18z" fill="#7cc242"/><path d="M1.500 8h18v5h-18z" fill="#c9e7a4"/><path d="M3 3v3M6 3v3M9 3v3M12 3v3" stroke="#8b8b8b" stroke-width="1"/><path d="M6.500 9v8M5.500 9h2M9.500 12.500h3M14 12.500h2" stroke="#222" stroke-width="1.300"/><path d="M21.500 1.500l2 1.500-8 15-2.500 1.500.3-3z" fill="#f2b43a" stroke="#a86f14" stroke-width=".6"/></svg><svg style="left:748px;top:7px" width="26" height="26" viewBox="0 0 26 26"><path d="M4 14C4 8.500 8 4.500 13.500 4.500c5.500 0 9.500 4 9.500 9.500v2H9.500c.3 2.700 2.300 4 5 4 2 0 3.800-.500 5.500-1.500v4c-1.800 1-4 1.500-6.500 1.500C7.800 24 4 20 4 14zm5.600-1.500h8c0-2.300-1.500-3.800-3.800-3.800s-3.900 1.500-4.200 3.800z" fill="#35a8ee"/><path d="M2.500 23.500C-1 19 5 9 13 4.500 18 1.700 23 1 24.500 3c1 1.500.2 4-1.500 6.500.8-2.200.8-3.700 0-4.500-1.700-1.500-6.500.5-11 4.500-5 4.500-8 10-6.500 12.500.6 1 2 1.200 3.800.8-2.800 1.700-5.500 2-6.800.700z" fill="#f3c21b"/></svg><div class="abs" style="left:786px;top:0;width:48px;height:38px;background:#b4733c"></div><div class="abs" style="left:786px;top:38px;width:48px;height:2px;background:#f7630c"></div><svg style="left:798px;top:8px" width="24" height="24" viewBox="0 0 24 24"><circle cx="12" cy="12" r="12" fill="#1ed760"/><path d="M5.500 8.700c4.300-1.300 9.300-.900 13.200 1.300M6.300 12.300c3.600-1 7.800-.600 11 1.300M7 15.700c3-.800 6.200-.500 8.800 1" stroke="#1a2a1c" stroke-width="1.900" fill="none" stroke-linecap="round"/></svg><svg style="left:847px;top:10px" width="23" height="19" viewBox="0 0 23 19"><rect x="0" y="0" width="23" height="19" fill="#000" stroke="#9a9a9a" stroke-width="1"/><rect x="0.500" y="0.500" width="22" height="2.500" fill="#bdbdbd"/><path d="M3 6.500v3M3 6.500h2M6.500 6.500v.1M6.500 9v.1M8 6l2 4M11 10h7" stroke="#fff" stroke-width="1.100" fill="none"/></svg><div class="abs" style="left:884px;top:0;width:48px;height:38px;background:#4c5f6b"></div><svg style="left:896px;top:8px" width="24" height="24" viewBox="0 0 24 24"><rect x="0" y="0" width="24" height="24" fill="#fff"/><rect x=".5" y=".5" width="23" height="23" fill="none" stroke="#111" stroke-width="1"/><rect x="4.500" y="1" width="15.500" height="22" fill="#050505"/><path transform="translate(.5,1) scale(1.560,1.470)" d="M4.800 .300h7.500V3L9.500 6l2.800 2.100V12l-1.800 2.700H2.700v-2.400L6.500 10 2.700 6.300V2.500z" fill="#ff0a0a"/></svg><svg style="left:945px;top:7px" width="26" height="26" viewBox="0 0 26 26"><path d="M2 16c0-6 5-10 11-10 5 0 9 3 9 7 0 3-2 4-4.500 4-2 0-3 1-2.500 3 .500 2-1 3-4 3-5 0-9-3-9-7z" fill="#dfe6ee" stroke="#8fa3b8" stroke-width=".8"/><circle cx="7" cy="12.500" r="1.900" fill="#e04a3a"/><circle cx="11.500" cy="9.500" r="1.900" fill="#58b947"/><circle cx="16.500" cy="10" r="1.900" fill="#f0b030"/><circle cx="6.500" cy="17.500" r="1.900" fill="#3a7fd8"/><path d="M23 1l1.500 1L15 21l-2 1.500.3-2.500z" fill="#d8964a" stroke="#8a5a22" stroke-width=".5"/><path d="M22 .5c1-.800 2.500.2 2.500 1.500l-1.200 2.300-2.300-1.300z" fill="#f4d9b0"/></svg><div class="abs" style="left:496px;top:38px;width:31px;height:2px;background:#76b9ed"></div><div class="abs" style="left:528px;top:38px;width:8px;height:2px;background:#76b9ed"></div><div class="abs" style="left:545px;top:38px;width:40px;height:2px;background:#76b9ed"></div><div class="abs" style="left:643px;top:38px;width:40px;height:2px;background:#76b9ed"></div><div class="abs" style="left:692px;top:38px;width:40px;height:2px;background:#76b9ed"></div><div class="abs" style="left:839px;top:38px;width:40px;height:2px;background:#76b9ed"></div><div class="abs" style="left:884px;top:38px;width:48px;height:2px;background:#76b9ed"></div><div class="abs" style="left:937px;top:38px;width:40px;height:2px;background:#76b9ed"></div><svg style="left:1628px;top:16px" width="13" height="8" viewBox="0 0 13 8"><path d="M.7 7.300L6.500 1.500l5.800 5.800" stroke="#fff" stroke-width="1.300" fill="none"/></svg><svg style="left:1649px;top:14px" width="18" height="12" viewBox="0 0 18 12"><path d="M4 11.500a3.500 3.500 0 0 1-.500-6.900A5 5 0 0 1 13 3.500a4 4 0 0 1 1 8z" fill="#e8ecf3"/><path d="M1 9.500c2-3 6-4.500 10.500-4 2 .2 4 1 5.500 2.500a4 4 0 0 1-3 3.500H4a3.500 3.500 0 0 1-3-2z" fill="#c4cde0"/></svg><svg style="left:1674.500px;top:15.500px" width="16" height="10" viewBox="0 0 16 10"><rect x=".6" y=".6" width="13.300" height="8.800" fill="none" stroke="#fff" stroke-width="1.200"/><rect x="14.500" y="3" width="1.300" height="4" fill="#fff"/><rect x="2.300" y="2.300" width="4.500" height="5.400" fill="#fff"/></svg><svg style="left:1698px;top:14px" width="17" height="14" viewBox="0 0 17 14"><path d="M3.500 1h12.500v9H3.500zM6.500 13h7M10 10v3" stroke="#fff" stroke-width="1.200" fill="none"/><path d="M.6.600h4.500v4H.6zM2.800 4.600v7.500h3.500" stroke="#fff" stroke-width="1.100" fill="#1c2a49"/></svg><svg style="left:1721.500px;top:13px" width="17" height="14" viewBox="0 0 17 14"><path d="M.6 4.700h2.700L6.800 1.200v11.600L3.300 9.300H.6z" stroke="#fff" stroke-width="1.100" fill="none"/><path d="M9 4.500a3.500 3.500 0 0 1 0 5M11.300 2.500a6.200 6.200 0 0 1 0 9M13.700.7a8.800 8.800 0 0 1 0 12.600" stroke="#fff" stroke-width="1.100" fill="none"/></svg><svg style="left:1746px;top:13px" width="17" height="15" viewBox="0 0 17 15"><path d="M4.300 0L0 2.800l4.300 2.700 4.200-2.700zM12.700 0l4.300 2.800-4.300 2.700-4.200-2.700zM0 8.200l4.300-2.700 4.200 2.700-4.200 2.800zM17 8.200l-4.300-2.700-4.200 2.700 4.200 2.800zM4.300 11.900l4.200-2.800 4.200 2.800-4.200 2.700z" fill="#fff"/></svg><svg style="left:1879px;top:12px" width="17" height="15" viewBox="0 0 17 15"><path d="M0 0h16.500v11.500H6L3 14.500v-3H0z" fill="#fff"/><path d="M3 3h10.500M3 5.700h10.500M3 8.400h10.500" stroke="#1b2548" stroke-width="1.200"/></svg><div class="abs" style="left:1886px;top:18px;width:18px;height:18px;border-radius:9px;background:#3b3d46;border:1px solid #8a8d96"></div><div class="abs" style="left:1915px;top:0;width:1px;height:40px;background:#55607a"></div>
</div>
<div class="t tk15" style="left:88.90px;top:1052px;color:#3a3a3a;"><span style="line-height:0;letter-spacing:-0.188px;font-size:14.75px;">Type here to search</span></div>
<div class="t tk12" style="left:1771.90px;top:1052px;color:#fff;"><span style="line-height:0;letter-spacing:-0.260px;font-size:11.25px;">POR</span></div>
<div class="t tk12" style="left:1813.20px;top:1043px;color:#fff;"><span style="line-height:0;letter-spacing:-0.208px;font-size:11.75px;">7:32 PM</span></div>
<div class="t tk12" style="left:1807.50px;top:1062px;color:#fff;"><span style="line-height:0;letter-spacing:0.072px;">05-Oct-19</span></div>
<div class="t tk11" style="left:1889.00px;top:1061px;color:#fff;"><span style="line-height:0;letter-spacing:0.133px;">12</span></div>

</body></html>
